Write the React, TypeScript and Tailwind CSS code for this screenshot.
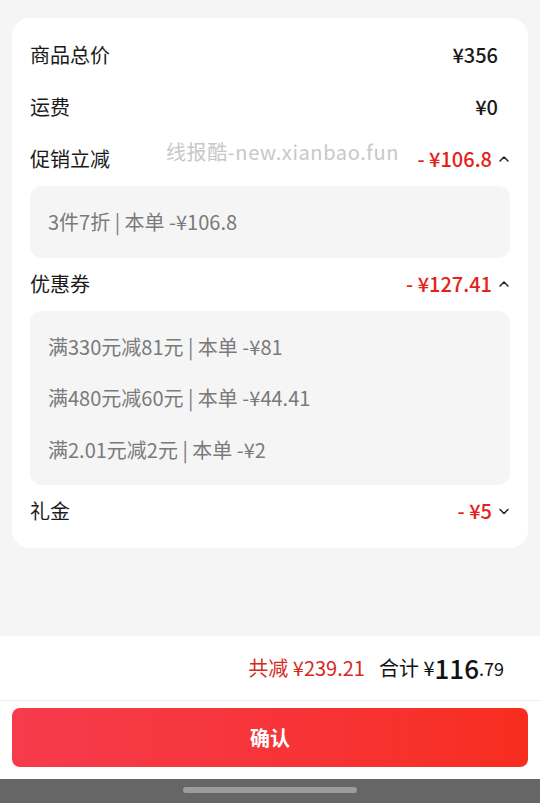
import React from "react";

const font = { fontFamily: '"Noto Sans CJK SC", "Noto Sans", sans-serif' };

function Chevron({ up }: { up: boolean }) {
  return (
    <svg width="12" height="12" viewBox="0 0 12 12" className="ml-[6px]">
      <path
        d={up ? "M2 8 L6 4 L10 8" : "M2 4.5 L6 8.5 L10 4.5"}
        fill="none"
        stroke="#222"
        strokeWidth="1.5"
        strokeLinecap="round"
        strokeLinejoin="round"
      />
    </svg>
  );
}

function Row({ label, value, red, arrow }: { label: string; value: string; red?: boolean; arrow?: "up" | "down" }) {
  return (
    <div className="flex h-[52px] items-center justify-between">
      <span className="text-[20px] text-[#1a1a1a]">{label}</span>
      <div className={`flex items-center ${arrow ? "pr-0" : "pr-[12px]"}`}>
        <span className={`text-[20px] font-medium ${red ? "text-[#e2231a]" : "text-[#1a1a1a]"}`}>{value}</span>
        {arrow && <Chevron up={arrow === "up"} />}
      </div>
    </div>
  );
}

export default function App() {
  return (
    <div className="relative flex h-[803px] w-[540px] flex-col bg-[#f5f5f5]" style={font}>
      <div className="mx-[12px] mt-[18px] rounded-[18px] bg-white px-[18px] pt-[11px] pb-[11px]">
        <Row label="商品总价" value="¥356" />
        <Row label="运费" value="¥0" />
        <Row label="促销立减" value="- ¥106.8" red arrow="up" />
        <div className="mt-[1px] rounded-[12px] bg-[#f5f5f5] px-[18px] py-[10px]">
          <div className="flex h-[52px] items-center text-[20px] text-[#7a7a7a]">3件7折 | 本单 -¥106.8</div>
        </div>
        <Row label="优惠券" value="- ¥127.41" red arrow="up" />
        <div className="mt-[1px] rounded-[12px] bg-[#f5f5f5] px-[18px] py-[10px]">
          <div className="flex h-[51px] items-center text-[20px] text-[#7a7a7a]">满330元减81元 | 本单 -¥81</div>
          <div className="flex h-[52px] items-center text-[20px] text-[#7a7a7a]">满480元减60元 | 本单 -¥44.41</div>
          <div className="flex h-[51px] items-center text-[20px] text-[#7a7a7a]">满2.01元减2元 | 本单 -¥2</div>
        </div>
        <Row label="礼金" value="- ¥5" red arrow="down" />
      </div>

      <div className="pointer-events-none absolute left-[166px] top-[137px] text-[20px] tracking-[0.6px] text-[#c8c8c8]">
        线报酷-new.xianbao.fun
      </div>

      <div className="flex-1" />

      <div className="flex h-[65px] items-center justify-end border-b border-[#eeeeee] bg-white pr-[36px]">
        <span className="text-[20px] text-[#d42a22]">共减 ¥239.21</span>
        <span className="ml-[14px] text-[20px] text-[#111]">合计 ¥</span>
        <span className="text-[26px] font-medium leading-none text-[#111]">116</span>
        <span className="text-[18px] text-[#111]">.79</span>
      </div>
      <div className="bg-white px-[12px] pt-[7px] pb-[12px]">
        <div className="flex h-[59px] items-center justify-center rounded-[8px] bg-gradient-to-r from-[#f63b4c] to-[#f72d1e] text-[20px] font-bold text-white">
          确认
        </div>
      </div>
      <div className="flex h-[24px] items-start justify-center bg-[#666666] pt-[8px]">
        <div className="h-[6px] w-[174px] rounded-full bg-[#9c9c9c]" />
      </div>
    </div>
  );
}
